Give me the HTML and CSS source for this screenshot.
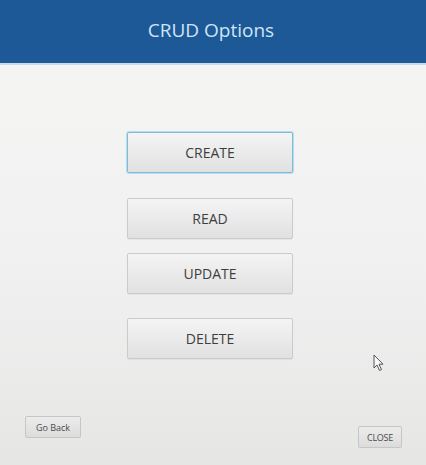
FILE: index.html
```html
<!DOCTYPE html>
<html>
<head>
<meta charset="utf-8">
<link rel="stylesheet" href="styles.css">
</head>
<body>
<div class="window">
  <header class="header"><h1 class="title">CRUD Options</h1></header>
  <main class="main">
    <div class="actions">
      <button class="btn btn-focus btn-create">CREATE</button>
      <button class="btn btn-read">READ</button>
      <button class="btn btn-update">UPDATE</button>
      <button class="btn btn-delete">DELETE</button>
    </div>
    <div class="footer">
      <button class="small-btn back">Go Back</button>
      <button class="small-btn close">CLOSE</button>
    </div>
  </main>
  <svg class="cursor" width="12" height="18" viewBox="0 0 12 18"><path d="M1 1 L1 14 L4 11 L6.5 16.5 L8.5 15.6 L6 10.2 L10 10.2 Z" fill="#fafafa" stroke="#555" stroke-width="1" stroke-linejoin="round"/></svg>
</div>
</body>
</html>
```
FILE: styles.css
```css
html, body {
  margin: 0;
  padding: 0;
}
body {
  width: 426px;
  height: 465px;
  overflow: hidden;
  font-family: "Open Sans", "Noto Sans", sans-serif;
}
.window {
  position: relative;
  width: 426px;
  height: 465px;
  display: flex;
  flex-direction: column;
  background: linear-gradient(#f5f5f4 0%, #f1f1f1 55%, #e6e6e5 100%);
}
.header {
  height: 65px;
  box-sizing: border-box;
  background: #1c5996;
  border-bottom: 2px solid #c9dcec;
  display: flex;
  align-items: center;
  justify-content: center;
}
.title {
  margin: 0 4px 4px 0;
  font-weight: 400;
  font-size: 19px;
  color: #cfe5f7;
}
.main {
  flex: 1;
  display: flex;
  flex-direction: column;
  justify-content: space-between;
}
.actions {
  display: flex;
  flex-direction: column;
  padding-left: 127px;
  padding-top: 67px;
}
.btn {
  width: 166px;
  height: 41px;
  font-family: "Open Sans", "Noto Sans", sans-serif;
  font-size: 14px;
  color: #3e3e3e;
  background: linear-gradient(#f4f4f4, #e1e1e1);
  border: 1px solid #cbcbcb;
  border-radius: 2px;
  box-shadow: 0 1px 1px rgba(0,0,0,0.05);
  padding: 0;
}
.btn-focus {
  border: 1px solid #7fbcd8;
  box-shadow: 0 0 0 1px #b9dcec;
}
.btn-read { margin-top: 25px; }
.btn-update { margin-top: 14px; }
.btn-delete { margin-top: 24px; }
.footer {
  display: flex;
  justify-content: space-between;
  align-items: flex-start;
  padding: 0 24px 17px 25px;
}
.small-btn {
  font-family: "Open Sans", "Noto Sans", sans-serif;
  font-size: 9px;
  color: #4a4a4a;
  background: linear-gradient(#ececec, #dcdcdc);
  border: 1px solid #c6c6c6;
  border-radius: 2px;
  padding: 0;
  height: 22px;
}
.back { width: 56px; }
.close { width: 44px; margin-top: 10px; letter-spacing: -0.3px; }
.cursor {
  position: absolute;
  left: 373px;
  top: 354px;
}
```
